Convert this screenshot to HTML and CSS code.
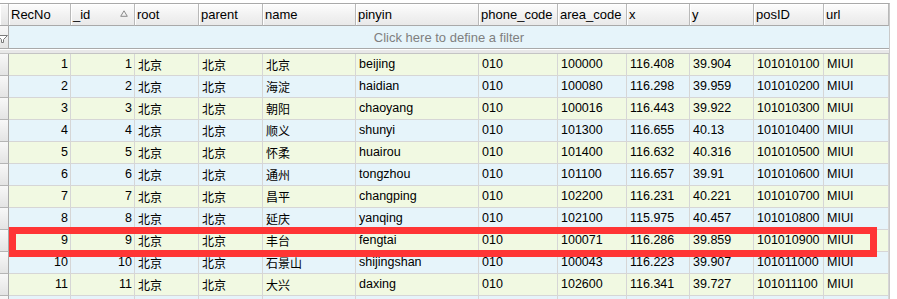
FILE: index.html
```html
<!DOCTYPE html>
<html>
<head>
<meta charset="utf-8">
<link rel="stylesheet" href="styles.css">
</head>
<body>
<div class="frame">
  <div class="grid">
    <div class="row head">
      <div class="cell ind"></div>
      <div class="cell">RecNo</div>
      <div class="cell sort">_id<svg class="tri" width="8" height="7" viewBox="0 0 8 7"><polygon points="4,0.8 7.3,6.3 0.7,6.3" fill="none" stroke="#8a8a8a" stroke-width="1"/></svg></div>
      <div class="cell">root</div>
      <div class="cell">parent</div>
      <div class="cell">name</div>
      <div class="cell">pinyin</div>
      <div class="cell">phone_code</div>
      <div class="cell">area_code</div>
      <div class="cell">x</div>
      <div class="cell">y</div>
      <div class="cell">posID</div>
      <div class="cell">url</div>
    </div>
    <div class="row filter">
      <div class="cell ind"><svg class="funnel" width="8" height="9" viewBox="0 0 8 9"><path d="M-3 1.5 H7.5 L3.5 5.5 V8.5 H1.5 V5.5 Z" fill="#fff" stroke="#7a7a7a" stroke-width="1"/></svg></div>
      <div class="cell filtertext">Click here to define a filter</div>
    </div>
    <div class="sep"></div>
    <div class="body">
      <div class="row odd"><div class="cell ind"></div><div class="cell num">1</div><div class="cell num">1</div><div class="cell cjk">北京</div><div class="cell cjk">北京</div><div class="cell cjk">北京</div><div class="cell">beijing</div><div class="cell">010</div><div class="cell">100000</div><div class="cell">116.408</div><div class="cell">39.904</div><div class="cell">101010100</div><div class="cell">MIUI</div></div>
      <div class="row even"><div class="cell ind"></div><div class="cell num">2</div><div class="cell num">2</div><div class="cell cjk">北京</div><div class="cell cjk">北京</div><div class="cell cjk">海淀</div><div class="cell">haidian</div><div class="cell">010</div><div class="cell">100080</div><div class="cell">116.298</div><div class="cell">39.959</div><div class="cell">101010200</div><div class="cell">MIUI</div></div>
      <div class="row odd"><div class="cell ind"></div><div class="cell num">3</div><div class="cell num">3</div><div class="cell cjk">北京</div><div class="cell cjk">北京</div><div class="cell cjk">朝阳</div><div class="cell">chaoyang</div><div class="cell">010</div><div class="cell">100016</div><div class="cell">116.443</div><div class="cell">39.922</div><div class="cell">101010300</div><div class="cell">MIUI</div></div>
      <div class="row even"><div class="cell ind"></div><div class="cell num">4</div><div class="cell num">4</div><div class="cell cjk">北京</div><div class="cell cjk">北京</div><div class="cell cjk">顺义</div><div class="cell">shunyi</div><div class="cell">010</div><div class="cell">101300</div><div class="cell">116.655</div><div class="cell">40.13</div><div class="cell">101010400</div><div class="cell">MIUI</div></div>
      <div class="row odd"><div class="cell ind"></div><div class="cell num">5</div><div class="cell num">5</div><div class="cell cjk">北京</div><div class="cell cjk">北京</div><div class="cell cjk">怀柔</div><div class="cell">huairou</div><div class="cell">010</div><div class="cell">101400</div><div class="cell">116.632</div><div class="cell">40.316</div><div class="cell">101010500</div><div class="cell">MIUI</div></div>
      <div class="row even"><div class="cell ind"></div><div class="cell num">6</div><div class="cell num">6</div><div class="cell cjk">北京</div><div class="cell cjk">北京</div><div class="cell cjk">通州</div><div class="cell">tongzhou</div><div class="cell">010</div><div class="cell">101100</div><div class="cell">116.657</div><div class="cell">39.91</div><div class="cell">101010600</div><div class="cell">MIUI</div></div>
      <div class="row odd"><div class="cell ind"></div><div class="cell num">7</div><div class="cell num">7</div><div class="cell cjk">北京</div><div class="cell cjk">北京</div><div class="cell cjk">昌平</div><div class="cell">changping</div><div class="cell">010</div><div class="cell">102200</div><div class="cell">116.231</div><div class="cell">40.221</div><div class="cell">101010700</div><div class="cell">MIUI</div></div>
      <div class="row even"><div class="cell ind"></div><div class="cell num">8</div><div class="cell num">8</div><div class="cell cjk">北京</div><div class="cell cjk">北京</div><div class="cell cjk">延庆</div><div class="cell">yanqing</div><div class="cell">010</div><div class="cell">102100</div><div class="cell">115.975</div><div class="cell">40.457</div><div class="cell">101010800</div><div class="cell">MIUI</div></div>
      <div class="row odd"><div class="cell ind"></div><div class="cell num">9</div><div class="cell num">9</div><div class="cell cjk">北京</div><div class="cell cjk">北京</div><div class="cell cjk">丰台</div><div class="cell">fengtai</div><div class="cell">010</div><div class="cell">100071</div><div class="cell">116.286</div><div class="cell">39.859</div><div class="cell">101010900</div><div class="cell">MIUI</div></div>
      <div class="row even"><div class="cell ind"></div><div class="cell num">10</div><div class="cell num">10</div><div class="cell cjk">北京</div><div class="cell cjk">北京</div><div class="cell cjk">石景山</div><div class="cell">shijingshan</div><div class="cell">010</div><div class="cell">100043</div><div class="cell">116.223</div><div class="cell">39.907</div><div class="cell">101011000</div><div class="cell">MIUI</div></div>
      <div class="row odd"><div class="cell ind"></div><div class="cell num">11</div><div class="cell num">11</div><div class="cell cjk">北京</div><div class="cell cjk">北京</div><div class="cell cjk">大兴</div><div class="cell">daxing</div><div class="cell">010</div><div class="cell">102600</div><div class="cell">116.341</div><div class="cell">39.727</div><div class="cell">101011100</div><div class="cell">MIUI</div></div>
      <div class="row even"><div class="cell ind"></div><div class="cell"></div><div class="cell"></div><div class="cell"></div><div class="cell"></div><div class="cell"></div><div class="cell"></div><div class="cell"></div><div class="cell"></div><div class="cell"></div><div class="cell"></div><div class="cell"></div><div class="cell"></div></div>
    </div>
  </div>
  <div class="highlight"></div>
</div>
</body>
</html>
```
FILE: styles.css
```css
html, body {
  margin: 0;
  padding: 0;
  background: #ffffff;
  overflow: hidden;
}
body {
  width: 897px;
  height: 299px;
  font-family: "Liberation Sans", "Noto Sans CJK SC", sans-serif;
  font-size: 12.5px;
  color: #000;
}
.frame {
  position: relative;
  width: 897px;
  height: 299px;
  padding-top: 3px;
  box-sizing: border-box;
  overflow: hidden;
}
.grid {
  width: 889px;
  border-top: 1px solid #a9a9a9;
  border-right: 1px solid #c9c9c9;
  box-sizing: content-box;
}
.row {
  display: grid;
  grid-template-columns: 9px 62px 64px 64px 64px 93px 123px 79px 69px 63px 64px 70px 65px;
  height: 22px;
  box-sizing: border-box;
}
.cell {
  box-sizing: border-box;
  border-right: 1px solid #d6d6d6;
  border-bottom: 1px solid #d6d6d6;
  padding: 0 3px;
  display: flex;
  align-items: center;
  white-space: nowrap;
  overflow: hidden;
  line-height: 1;
}
.head .cell {
  background: linear-gradient(#fdfdfd, #f1f1f1 55%, #e9e9e9);
  border-right: 1px solid #b9b9b9;
  border-bottom: 1px solid #a9a9a9;
  box-shadow: inset 1px 1px 0 #ffffff;
  padding-left: 2px;
  font-size: 13px;
}
.head .ind {
  background: #ececec;
}
.sort {
  justify-content: space-between;
}
.tri {
  margin-right: 3px;
  margin-top: -2px;
}
.ind {
  padding: 0;
  background: linear-gradient(#f7f7f7, #e3e3e3);
  border-right: 1px solid #a9a9a9;
  border-bottom: 1px solid #b5b5b5;
}
.filter {
  grid-template-columns: 9px 880px;
  height: 23px;
}
.filter .cell {
  border-bottom: 1px solid #a9a9a9;
}
.filter .filtertext {
  background: #e6f4fa;
  justify-content: center;
  color: #7f7f7f;
  border-right: none;
  font-size: 13px;
}
.filter .ind {
  background: #ececec;
  justify-content: flex-end;
  align-items: center;
  overflow: hidden;
}
.funnel {
  display: block;
  margin-top: 2px;
}
.sep {
  background: #e8e8e8;
  border-top: 1px solid #ffffff;
  border-bottom: 1px solid #c4c4c4;
  box-sizing: border-box;
  height: 5px;
}
.odd .cell {
  background: #f1f9e2;
}
.even .cell {
  background: #e6f4fa;
}
.row .ind {
  background: linear-gradient(#f8f8f8, #e4e4e4);
}
.cjk {
  font-size: 12px;
  font-family: "Noto Sans CJK SC", sans-serif;
}
.num {
  justify-content: flex-end;
  padding-right: 2px;
}
.highlight {
  position: absolute;
  left: 9px;
  top: 227px;
  width: 868px;
  height: 30px;
  box-sizing: border-box;
  border: 7px solid #ff3535;
}
```
